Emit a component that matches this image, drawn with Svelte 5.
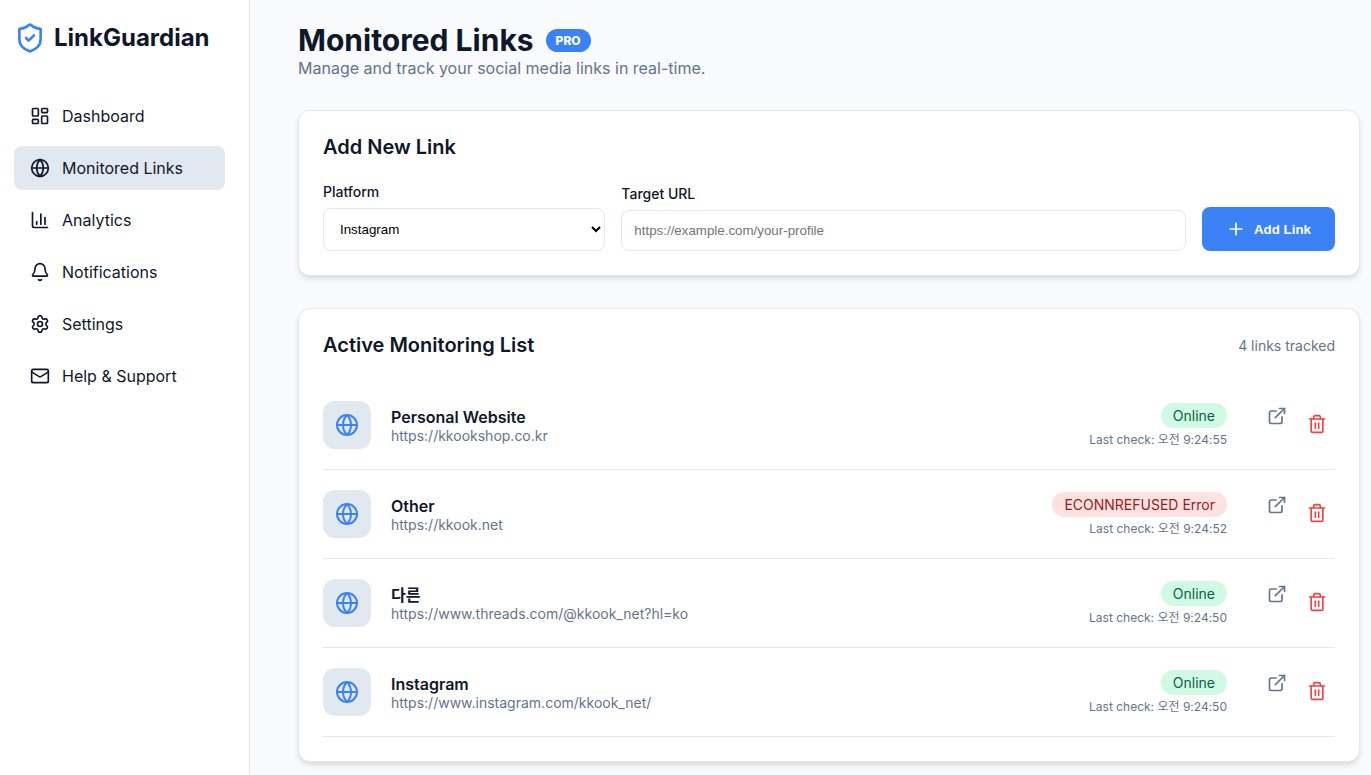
<script>
    let navItems = [
        { name: "Dashboard", icon: "dashboard" },
        { name: "Monitored Links", icon: "globe" },
        { name: "Analytics", icon: "chart" },
        { name: "Notifications", icon: "bell" },
        { name: "Settings", icon: "settings" },
        { name: "Help & Support", icon: "mail" },
    ];
    let current = "Monitored Links";

    let platforms = ["Instagram", "Threads", "Personal Website", "Other"];
    let platform = "Instagram";
    let url = "";

    let links = [
        { name: "Personal Website", url: "https://kkookshop.co.kr", status: "Online", ok: true, time: "오전 9:24:55" },
        { name: "Other", url: "https://kkook.net", status: "ECONNREFUSED Error", ok: false, time: "오전 9:24:52" },
        { name: "다른", url: "https://www.threads.com/@kkook_net?hl=ko", status: "Online", ok: true, time: "오전 9:24:50" },
        { name: "Instagram", url: "https://www.instagram.com/kkook_net/", status: "Online", ok: true, time: "오전 9:24:50" },
    ];

    function addLink() {
        if (url == "") {
            return;
        }
        let time = new Date().toLocaleTimeString("ko-KR");
        links = [{ name: platform, url, status: "Online", ok: true, time }, ...links];
        url = "";
    }

    function removeLink(index) {
        links.splice(index, 1);
        links = links;
    }
</script>

{#snippet icon(name, size)}
    <svg width={size} height={size} viewBox="0 0 24 24" fill="none" stroke="currentColor" stroke-width="2" stroke-linecap="round" stroke-linejoin="round" aria-hidden="true">
        {#if name == "shield"}
            <path d="M20 13c0 5-3.5 7.5-7.66 8.95a1 1 0 0 1-.67-.01C7.5 20.5 4 18 4 13V6a1 1 0 0 1 1-1c2 0 4.5-1.2 6.24-2.72a1.17 1.17 0 0 1 1.52 0C14.51 3.81 17 5 19 5a1 1 0 0 1 1 1z" />
            <path d="m9 12 2 2 4-4" />
        {:else if name == "dashboard"}
            <rect width="7" height="9" x="3" y="3" rx="1" />
            <rect width="7" height="5" x="14" y="3" rx="1" />
            <rect width="7" height="9" x="14" y="12" rx="1" />
            <rect width="7" height="5" x="3" y="16" rx="1" />
        {:else if name == "globe"}
            <circle cx="12" cy="12" r="10" />
            <path d="M12 2a14.5 14.5 0 0 0 0 20 14.5 14.5 0 0 0 0-20" />
            <path d="M2 12h20" />
        {:else if name == "chart"}
            <path d="M3 3v16a2 2 0 0 0 2 2h16" />
            <path d="M18 17V9" />
            <path d="M13 17V5" />
            <path d="M8 17v-3" />
        {:else if name == "bell"}
            <path d="M10.268 21a2 2 0 0 0 3.464 0" />
            <path d="M3.262 15.326A1 1 0 0 0 4 17h16a1 1 0 0 0 .74-1.673C19.41 13.956 18 12.499 18 8A6 6 0 0 0 6 8c0 4.499-1.411 5.956-2.738 7.326" />
        {:else if name == "settings"}
            <path d="M9.671 4.136a2.34 2.34 0 0 1 4.659 0 2.34 2.34 0 0 0 3.319 1.915 2.34 2.34 0 0 1 2.33 4.033 2.34 2.34 0 0 0 0 3.831 2.34 2.34 0 0 1-2.33 4.033 2.34 2.34 0 0 0-3.319 1.915 2.34 2.34 0 0 1-4.659 0 2.34 2.34 0 0 0-3.32-1.915 2.34 2.34 0 0 1-2.33-4.033 2.34 2.34 0 0 0 0-3.831A2.34 2.34 0 0 1 6.35 6.051a2.34 2.34 0 0 0 3.319-1.915" />
            <circle cx="12" cy="12" r="3" />
        {:else if name == "mail"}
            <path d="m22 7-8.991 5.727a2 2 0 0 1-2.009 0L2 7" />
            <rect x="2" y="4" width="20" height="16" rx="2" />
        {:else if name == "plus"}
            <path d="M5 12h14" />
            <path d="M12 5v14" />
        {:else if name == "external"}
            <path d="M15 3h6v6" />
            <path d="M10 14 21 3" />
            <path d="M18 13v6a2 2 0 0 1-2 2H5a2 2 0 0 1-2-2V8a2 2 0 0 1 2-2h6" />
        {:else if name == "trash"}
            <path d="M10 11v6" />
            <path d="M14 11v6" />
            <path d="M19 6v14a2 2 0 0 1-2 2H7a2 2 0 0 1-2-2V6" />
            <path d="M3 6h18" />
            <path d="M8 6V4a2 2 0 0 1 2-2h4a2 2 0 0 1 2 2v2" />
        {/if}
    </svg>
{/snippet}

<div class="layout">
    <aside class="sidebar">
        <div class="logo">
            {@render icon("shield", 32)}
            <span>LinkGuardian</span>
        </div>
        <nav>
            {#each navItems as item}
                <a href="#{item.icon}" class="nav-item" class:active={item.name == current} on:click|preventDefault={() => (current = item.name)}>
                    {@render icon(item.icon, 20)}
                    {item.name}
                </a>
            {/each}
        </nav>
    </aside>

    <main>
        <header>
            <div class="title-row">
                <h1>Monitored Links</h1>
                <span class="pro">PRO</span>
            </div>
            <p>Manage and track your social media links in real-time.</p>
        </header>

        <section class="card">
            <h2>Add New Link</h2>
            <form on:submit|preventDefault={addLink}>
                <div class="field">
                    <label for="platform">Platform</label>
                    <select id="platform" bind:value={platform}>
                        {#each platforms as p}
                            <option value={p}>{p}</option>
                        {/each}
                    </select>
                </div>
                <div class="field">
                    <label for="url">Target URL</label>
                    <input type="url" id="url" bind:value={url} placeholder="https://example.com/your-profile" />
                </div>
                <button type="submit" class="add">
                    {@render icon("plus", 20)}
                    Add Link
                </button>
            </form>
        </section>

        <section class="card">
            <div class="list-head">
                <h2>Active Monitoring List</h2>
                <span>{links.length} links tracked</span>
            </div>
            <ul>
                {#each links as link, index}
                    <li>
                        <div class="tile">{@render icon("globe", 24)}</div>
                        <div class="info">
                            <h3>{link.name}</h3>
                            <p>{link.url}</p>
                        </div>
                        <div class="status">
                            <span class="badge" class:error={!link.ok}>{link.status}</span>
                            <span class="time">Last check: {link.time}</span>
                        </div>
                        <div class="actions">
                            <a href={link.url} target="_blank" aria-label="Open {link.name}">{@render icon("external", 20)}</a>
                            <button type="button" aria-label="Delete {link.name}" on:click={() => removeLink(index)}>{@render icon("trash", 20)}</button>
                        </div>
                    </li>
                {/each}
            </ul>
        </section>
    </main>
</div>

<style>
    :global(body) {
        margin: 0;
        background-color: #f8fafc;
    }

    .layout {
        display: flex;
        min-height: 100vh;
        font-family: Inter, "Noto Sans CJK KR", sans-serif;
        font-size: 16px;
        color: #0f172a;
    }

    .layout * {
        box-sizing: border-box;
    }

    svg {
        display: block;
        flex-shrink: 0;
    }

    h1, h2, h3, p, ul {
        margin: 0;
        padding: 0;
    }

    .sidebar {
        width: 250px;
        flex-shrink: 0;
        padding: 21px 24px 24px 14px;
        background-color: white;
        border-right: 1px solid #e2e8f0;
    }

    .logo {
        display: flex;
        align-items: center;
        gap: 8px;
        margin-bottom: 39px;
        font-size: 24px;
        font-weight: 700;
        line-height: 34px;
    }

    .logo svg {
        color: #3b82f6;
    }

    nav {
        display: flex;
        flex-direction: column;
        gap: 8px;
    }

    .nav-item {
        display: flex;
        align-items: center;
        gap: 12px;
        padding: 12px 16px;
        border-radius: 8px;
        line-height: 20px;
        color: #0f172a;
        text-decoration: none;
    }

    .nav-item.active {
        background-color: #e2e8f0;
    }

    main {
        flex: 1;
        min-width: 0;
        display: flex;
        flex-direction: column;
        gap: 32px;
        padding: 22px 11px 12px 48px;
    }

    .title-row {
        display: flex;
        align-items: center;
        gap: 12px;
    }

    h1 {
        font-size: 30px;
        font-weight: 700;
        line-height: 37px;
    }

    .pro {
        padding: 4px 10px;
        border-radius: 20px;
        background-color: #3b82f6;
        color: white;
        font-size: 12px;
        font-weight: 800;
        line-height: 15px;
    }

    header p {
        color: #64748b;
        line-height: 19px;
    }

    .card {
        padding: 24px;
        background-color: white;
        border: 1px solid #e2e8f0;
        border-radius: 12px;
        box-shadow: 0 4px 6px -1px rgba(0, 0, 0, 0.1), 0 2px 4px -1px rgba(0, 0, 0, 0.06);
    }

    h2 {
        font-size: 20px;
        font-weight: 600;
        line-height: 24px;
    }

    form {
        display: grid;
        grid-template-columns: 1fr 2fr auto;
        align-items: end;
        gap: 16px;
        margin-top: 24px;
    }

    .field {
        display: flex;
        flex-direction: column;
        gap: 8px;
    }

    label {
        font-size: 14px;
        font-weight: 500;
        line-height: 17px;
    }

    select, input {
        width: 100%;
        padding: 12px;
        border: 1px solid #e2e8f0;
        border-radius: 8px;
        background-color: white;
        font-family: "Liberation Sans", Arial, sans-serif;
        color: black;
    }

    .add {
        display: flex;
        align-items: center;
        gap: 8px;
        padding: 12px 24px;
        border: none;
        border-radius: 8px;
        background-color: #3b82f6;
        color: white;
        font-family: "Liberation Sans", Arial, sans-serif;
        font-weight: 600;
    }

    .list-head {
        display: flex;
        justify-content: space-between;
        align-items: center;
        margin-bottom: 24px;
    }

    .list-head span {
        font-size: 14px;
        color: #64748b;
    }

    li {
        display: flex;
        align-items: center;
        padding: 20px 0;
        border-bottom: 1px solid #e2e8f0;
        list-style: none;
    }

    .tile {
        display: flex;
        align-items: center;
        justify-content: center;
        width: 48px;
        height: 48px;
        margin-right: 20px;
        border-radius: 12px;
        background-color: #e2e8f0;
        color: #3b82f6;
    }

    .info {
        flex: 1;
        min-width: 0;
        padding-top: 2px;
    }

    h3 {
        font-size: 16px;
        font-weight: 600;
        line-height: 19px;
    }

    .info p {
        font-size: 14px;
        line-height: 17px;
        color: #64748b;
    }

    .status {
        display: flex;
        flex-direction: column;
        align-items: flex-end;
        gap: 4px;
        margin-right: 32px;
    }

    .badge {
        padding: 4px 12px;
        border-radius: 20px;
        background-color: #d1fae5;
        color: #065f46;
        font-size: 14px;
        line-height: 17px;
    }

    .badge.error {
        background-color: #fee2e2;
        color: #991b1b;
    }

    .time {
        font-size: 12px;
        line-height: 15px;
        color: #64748b;
    }

    .actions {
        display: flex;
        align-items: flex-start;
        gap: 4px;
        padding-bottom: 2px;
    }

    .actions a {
        padding: 0 8px;
        color: #64748b;
    }

    .actions button {
        padding: 8px;
        border: none;
        background: none;
        color: #ef4444;
    }
</style>
